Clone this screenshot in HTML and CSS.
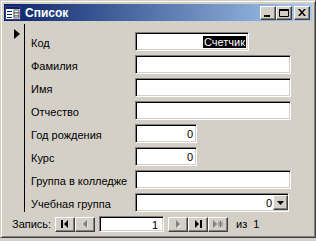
FILE: index.html
```html
<!DOCTYPE html>
<html lang="ru">
  <head>
    <meta charset="UTF-8" />
    <title>Список</title>
    <link rel="stylesheet" href="styles.css">
  </head>
  <body>
    <div class="window">
      <div class="titlebar">
        <svg class="app-icon" viewBox="0 0 16 14">
          <rect x="0.5" y="0.5" width="15" height="13" fill="#fff" stroke="#3a3a8a" />
          <rect x="1" y="1" width="14" height="2" fill="#0a246a" />
          <rect x="2" y="5" width="5" height="1" fill="#0a246a" />
          <rect x="2" y="8" width="5" height="1" fill="#0a246a" />
          <rect x="2" y="11" width="5" height="1" fill="#0a246a" />
          <rect x="9" y="4" width="5" height="3" fill="#fff" stroke="#555" stroke-width="1" />
          <rect x="9" y="7" width="5" height="3" fill="#fff" stroke="#555" stroke-width="1" />
          <rect x="9" y="10" width="5" height="2" fill="#fff" stroke="#555" stroke-width="1" />
        </svg>
        <span class="title">Список</span>
        <div class="caption-buttons">
          <button class="cap-btn">
            <svg viewBox="0 0 12 10"><rect x="2" y="7" width="6" height="2" fill="#000" /></svg>
          </button>
          <button class="cap-btn">
            <svg viewBox="0 0 12 10"><path d="M1.5 1.5h9v7h-9z" fill="none" stroke="#000" /><rect x="1" y="1" width="10" height="2" fill="#000" /></svg>
          </button>
          <button class="cap-btn cap-close">
            <svg viewBox="0 0 12 10"><path d="M2 1l2 0 2 2.5 2-2.5 2 0-3 3.5 3 3.5-2 0-2-2.5-2 2.5-2 0 3-3.5z" fill="#000" /></svg>
          </button>
        </div>
      </div>

      <div class="client">
        <div class="detail">
          <div class="selector">
            <svg class="current" viewBox="0 0 6 10"><path d="M0 0l6 5-6 5z" fill="#000" /></svg>
          </div>
          <div class="fields">
            <div class="row">
              <span class="label">Код</span>
              <div class="box box-key"><span class="counter">Счетчик</span></div>
            </div>
            <div class="row">
              <span class="label">Фамилия</span>
              <div class="box box-wide"></div>
            </div>
            <div class="row">
              <span class="label">Имя</span>
              <div class="box box-wide"></div>
            </div>
            <div class="row">
              <span class="label">Отчество</span>
              <div class="box box-wide"></div>
            </div>
            <div class="row">
              <span class="label">Год рождения</span>
              <div class="box box-num">0</div>
            </div>
            <div class="row">
              <span class="label">Курс</span>
              <div class="box box-num">0</div>
            </div>
            <div class="row">
              <span class="label">Группа в колледже</span>
              <div class="box box-wide"></div>
            </div>
            <div class="row">
              <span class="label">Учебная группа</span>
              <div class="box box-combo">
                <span class="combo-value">0</span>
                <button class="combo-btn">
                  <svg viewBox="0 0 7 4"><path d="M0 0h7l-3.5 4z" fill="#000" /></svg>
                </button>
              </div>
            </div>
          </div>
        </div>

        <div class="navbar">
          <span class="nav-label">Запись:</span>
          <button class="nav-btn">
            <svg viewBox="0 0 8 8"><rect x="0" y="0" width="2" height="8" fill="#000" /><path d="M7 0v8l-4-4z" fill="#000" /></svg>
          </button>
          <button class="nav-btn nav-off">
            <svg viewBox="0 0 8 8"><path d="M6 0v8l-4-4z" fill="#808080" /><path d="M6.5 0.5v8l-0.5 -0.5z" fill="#fff" /></svg>
          </button>
          <div class="nav-record">1</div>
          <button class="nav-btn nav-off">
            <svg viewBox="0 0 8 8"><path d="M2 0v8l4-4z" fill="#808080" /><path d="M3 8.5l3.5-3.5" stroke="#fff" /></svg>
          </button>
          <button class="nav-btn">
            <svg viewBox="0 0 8 8"><path d="M1 0v8l4-4z" fill="#000" /><rect x="6" y="0" width="2" height="8" fill="#000" /></svg>
          </button>
          <button class="nav-btn nav-off">
            <svg viewBox="0 0 10 8"><path d="M0 0v8l4-4z" fill="#808080" /><path d="M7.5 0.5v7M4.5 4h6M5.5 1.5l4 5M9.5 1.5l-4 5" stroke="#808080" stroke-width="1" /></svg>
          </button>
          <span class="nav-total">из&nbsp;&nbsp;1</span>
        </div>
      </div>
    </div>
  </body>
</html>
```

FILE: styles.css
```css
body {
  margin: 0;
  padding: 0;
  width: 316px;
  height: 241px;
  background: #d4d0c8;
  font-family: "Liberation Sans", Arial, sans-serif;
  font-size: 11px;
  color: #000;
  overflow: hidden;
}

.window {
  box-sizing: border-box;
  width: 316px;
  height: 238px;
  background: #d4d0c8;
  border-top: 1px solid #d4d0c8;
  border-left: 1px solid #d4d0c8;
  border-right: 1px solid #404040;
  border-bottom: 1px solid #404040;
  box-shadow: inset 1px 1px 0 #fff, inset -1px -1px 0 #808080;
  padding: 3px;
  display: flex;
  flex-direction: column;
}

.titlebar {
  height: 18px;
  display: flex;
  align-items: center;
  background: linear-gradient(to right, #0a246a, #a6caf0);
  padding: 0 2px 0 1px;
}

.app-icon {
  width: 16px;
  height: 14px;
  margin-right: 4px;
}

.title {
  color: #fff;
  font-weight: bold;
  font-size: 12px;
  flex: 1;
}

.caption-buttons {
  display: flex;
  gap: 0;
}

.cap-btn {
  box-sizing: border-box;
  width: 16px;
  height: 14px;
  padding: 0;
  margin: 0;
  background: #d4d0c8;
  border: 1px solid;
  border-color: #fff #404040 #404040 #fff;
  box-shadow: inset -1px -1px 0 #808080;
  display: flex;
  align-items: center;
  justify-content: center;
}

.cap-btn svg {
  width: 12px;
  height: 10px;
}

.cap-close {
  margin-left: 2px;
}

.client {
  flex: 1;
  margin-top: 1px;
  display: flex;
  flex-direction: column;
}

.detail {
  flex: 1;
  display: flex;
}

.selector {
  width: 20px;
  border-right: 1px solid #000;
  margin-top: 2px;
  margin-bottom: 2px;
}

.current {
  display: block;
  width: 6px;
  height: 10px;
  margin: 5px 0 0 10px;
}

.fields {
  padding: 8px 0 0 6px;
}

.row {
  display: flex;
  align-items: center;
  height: 23px;
}

.label {
  width: 104px;
  padding-top: 2px;
}

.box {
  box-sizing: border-box;
  height: 19px;
  background: #fff;
  border: 1px solid;
  border-color: #808080 #fff #fff #808080;
  box-shadow: inset 1px 1px 0 #000, inset -1px -1px 0 #d4d0c8;
  padding: 2px 3px 0 2px;
  text-align: right;
  line-height: 14px;
}

.box-key {
  width: 114px;
  padding: 2px 2px 0 0;
}

.counter {
  display: inline-block;
  background: #000;
  color: #fff;
  padding: 0 1px;
  line-height: 12px;
}

.box-wide {
  width: 156px;
}

.box-num {
  width: 62px;
}

.box-combo {
  width: 154px;
  display: flex;
  justify-content: flex-end;
  padding: 1px 0 1px 2px;
}

.combo-value {
  padding-top: 1px;
  padding-right: 1px;
}

.combo-btn {
  box-sizing: border-box;
  width: 15px;
  height: 15px;
  padding: 0;
  background: #d4d0c8;
  border: 1px solid;
  border-color: #fff #404040 #404040 #fff;
  box-shadow: inset -1px -1px 0 #808080;
  display: flex;
  align-items: center;
  justify-content: center;
}

.combo-btn svg {
  width: 7px;
  height: 4px;
}

.navbar {
  height: 20px;
  display: flex;
  align-items: center;
  padding-left: 8px;
}

.nav-label {
  width: 43px;
}

.nav-btn {
  box-sizing: border-box;
  width: 20px;
  height: 15px;
  padding: 0;
  margin: 0 0 0 0;
  background: #d4d0c8;
  border: 1px solid;
  border-color: #fff #404040 #404040 #fff;
  box-shadow: inset -1px -1px 0 #808080;
  display: flex;
  align-items: center;
  justify-content: center;
}

.nav-btn svg {
  width: 8px;
  height: 8px;
}

.nav-btn:last-of-type svg {
  width: 10px;
}

.nav-record {
  box-sizing: border-box;
  width: 65px;
  height: 16px;
  margin: 0 4px 0 4px;
  background: #fff;
  border: 1px solid;
  border-color: #808080 #fff #fff #808080;
  box-shadow: inset 1px 1px 0 #000, inset -1px -1px 0 #d4d0c8;
  text-align: right;
  padding: 1px 5px 0 0;
  line-height: 14px;
}

.nav-total {
  margin-left: 8px;
}
```
